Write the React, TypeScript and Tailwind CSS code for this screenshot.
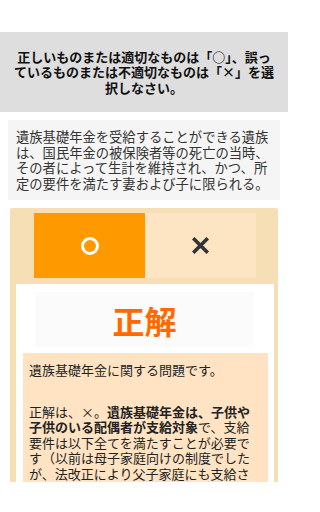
import React from "react";

const font = { fontFamily: '"Noto Sans CJK JP", "Noto Sans", sans-serif' };

export default function App() {
  return (
    <div className="w-[288px] h-[512px] bg-white text-[#222]" style={font}>
      <div className="h-[482px] overflow-hidden pt-[32px]">
        {/* instructions */}
        <div className="h-[80px] bg-[#dedede] px-[12px] flex items-center justify-center">
          <p className="text-[13px] leading-[15.5px] font-bold text-center text-[#111]">
            正しいものまたは適切なものは「○」、誤っているものまたは不適切なものは「×」を選択しなさい。
          </p>
        </div>

        {/* question */}
        <div className="mx-[8px] mt-[8px] h-[80px] bg-[#f5f5f5] pl-[8px] pr-[6px] flex items-center">
          <p className="text-[13.3px] leading-[15.5px] text-[#333]">
            遺族基礎年金を受給することができる遺族は、国民年金の被保険者等の死亡の当時、その者によって生計を維持され、かつ、所定の要件を満たす妻および子に限られる。
          </p>
        </div>

        {/* answer card */}
        <div className="mx-[10px] mt-[8px] bg-[#f6dfb4] rounded-t-[2px] pt-[5px] pl-[6px] pr-[4px] h-[300px]">
          <div className="mx-[18px] flex h-[65px]">
            <button className="flex-1 bg-[#ff9900] flex items-center justify-center">
              <span className="block w-[18px] h-[18px] rounded-full border-[3px] border-white" />
            </button>
            <button className="flex-1 bg-[#fde4c3] flex items-center justify-center">
              <svg width="17" height="17" viewBox="0 0 17 17">
                <path d="M2.5 2.5 L14.5 14.5 M14.5 2.5 L2.5 14.5" stroke="#333" strokeWidth="3.6" strokeLinecap="square" />
              </svg>
            </button>
          </div>

          <div className="mt-[6px] bg-white h-[220px] pt-[8px]">
            <div className="ml-[19px] mr-[20px] h-[55px] bg-[#fbfbfb] flex items-center justify-center">
              <span className="text-[32px] leading-none font-bold text-[#ff6a00]">正解</span>
            </div>
            <div className="mt-[6px] ml-[7px] mr-[6px] bg-[#ffe3c2] px-[6px] pt-[9px] pb-[10px] text-[13px] leading-[15.5px] text-[#222]">
              <p>遺族基礎年金に関する問題です。</p>
              <p className="mt-[26px]">
                正解は、×。<b>遺族基礎年金は、子供や子供のいる配偶者が支給対象</b>で、支給要件は以下全てを満たすことが必要です（以前は母子家庭向けの制度でしたが、法改正により父子家庭にも支給されるようになりました）。
              </p>
            </div>
          </div>
        </div>
      </div>
    </div>
  );
}
